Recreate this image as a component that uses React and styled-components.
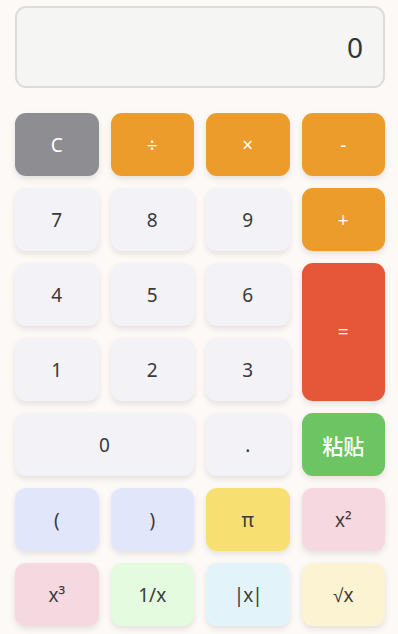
import React from "react";
import styled, { createGlobalStyle } from "styled-components";

const Global = createGlobalStyle`
  html, body { margin: 0; padding: 0; background: #fdf9f6; }
  body { font-family: "Noto Sans", "Liberation Sans", "Noto Sans CJK SC", sans-serif; }
`;

const Page = styled.div`
  padding: 6px 13px 8px 15px;
  display: flex;
  flex-direction: column;
  gap: 25px;
  width: 370px;
`;

const Display = styled.div`
  height: 78px;
  border: 2px solid #dcdcdb;
  border-radius: 11px;
  background: #f5f5f3;
  display: flex;
  align-items: center;
  justify-content: flex-end;
  padding: 0 20px;
  font-size: 28px;
  color: #333;
`;

const Grid = styled.div`
  display: grid;
  grid-template-columns: repeat(4, 1fr);
  grid-auto-rows: 63px;
  gap: 12px;
`;

const palette = {
  gray: ["#8e8d92", "#fff"],
  orange: ["#ec9c2b", "#fff"],
  red: ["#e6573a", "#fff"],
  green: ["#6dc462", "#fff"],
  light: ["#f2f2f7", "#3a3a3a"],
  lavender: ["#e1e6fb", "#3a3a3a"],
  yellow: ["#f7df72", "#3a3a3a"],
  pink: ["#f6d8e0", "#3a3a3a"],
  mint: ["#e4fbe0", "#3a3a3a"],
  sky: ["#e2f4f9", "#3a3a3a"],
  cream: ["#fcf3d3", "#3a3a3a"],
};

const Key = styled.button`
  border: none;
  border-radius: 11px;
  background: ${(p) => palette[p.$tone][0]};
  color: ${(p) => palette[p.$tone][1]};
  font-family: "Noto Sans", "Liberation Sans", "Noto Sans CJK SC", sans-serif;
  font-size: ${(p) => (p.$big ? "21px" : "19px")};
  font-weight: ${(p) => (p.$big ? 500 : 400)};
  letter-spacing: ${(p) => (p.$tight ? "-1px" : "0")};
  box-shadow: 0 3px 6px rgba(0, 0, 0, 0.1);
  grid-column: span ${(p) => p.$cols || 1};
  grid-row: span ${(p) => p.$rows || 1};
  display: flex;
  align-items: center;
  justify-content: center;
  padding: 0;
  cursor: pointer;
`;

const keys = [
  ["C", "gray"], ["÷", "orange"], ["×", "orange"], ["-", "orange"],
  ["7", "light"], ["8", "light"], ["9", "light"], ["+", "orange"],
  ["4", "light"], ["5", "light"], ["6", "light"], ["=", "red", 1, 2],
  ["1", "light"], ["2", "light"], ["3", "light"],
  ["0", "light", 2], [".", "light"], ["粘贴", "green", 1, 1, true],
  ["(", "lavender"], [")", "lavender"], ["π", "yellow"], ["x²", "pink"],
  ["x³", "pink"], ["1/x", "mint"], ["|x|", "sky", 1, 1, false, true], ["√x", "cream"],
];

export default function App() {
  return (
    <>
      <Global />
      <Page>
        <Display>0</Display>
        <Grid>
          {keys.map(([label, tone, cols, rows, big, tight], i) => (
            <Key key={i} $tone={tone} $cols={cols} $rows={rows} $big={big} $tight={tight}>
              {label}
            </Key>
          ))}
        </Grid>
      </Page>
    </>
  );
}
